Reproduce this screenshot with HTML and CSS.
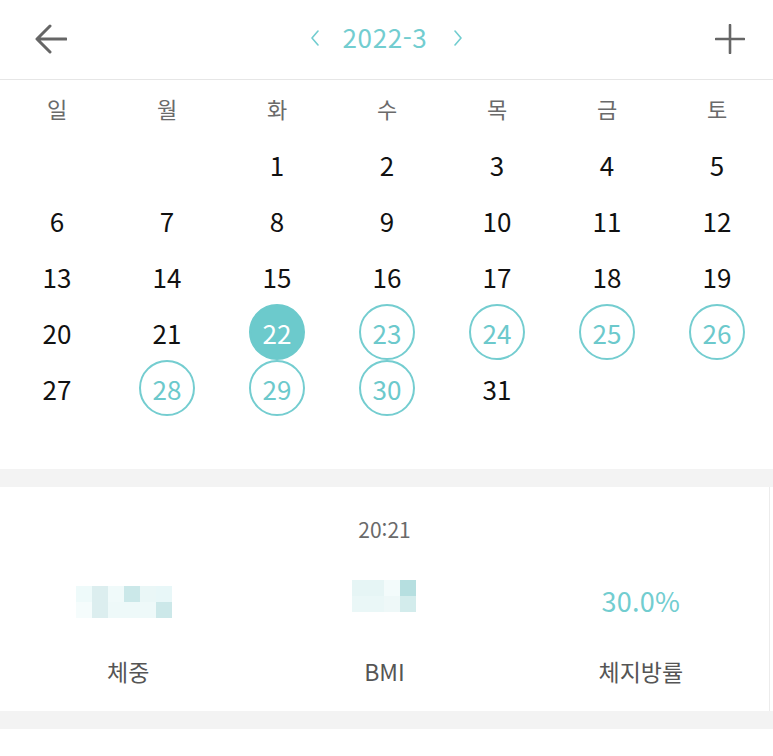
FILE: index.html
```html
<!DOCTYPE html>
<html lang="ko">
<head>
<meta charset="utf-8">
<link rel="stylesheet" href="styles.css">
</head>
<body>
<div class="app">
  <header class="topbar">
    <button class="icon-btn back" aria-label="back">
      <svg width="32" height="30" viewBox="0 0 32 30"><path d="M31 15H3M15 2L2 15L15 28" fill="none" stroke="#666" stroke-width="3" stroke-linecap="round" stroke-linejoin="round"/></svg>
    </button>
    <div class="month-nav">
      <span class="chev">
        <svg width="10" height="16" viewBox="0 0 10 16"><path d="M8 1L2 8L8 15" fill="none" stroke="#72cdd0" stroke-width="1.6" stroke-linecap="round" stroke-linejoin="round"/></svg>
      </span>
      <span class="month">2022-3</span>
      <span class="chev">
        <svg width="10" height="16" viewBox="0 0 10 16"><path d="M2 1L8 8L2 15" fill="none" stroke="#72cdd0" stroke-width="1.6" stroke-linecap="round" stroke-linejoin="round"/></svg>
      </span>
    </div>
    <button class="icon-btn plus" aria-label="add">
      <svg width="30" height="30" viewBox="0 0 30 30"><path d="M15 1V29M1 15H29" fill="none" stroke="#666" stroke-width="2.6" stroke-linecap="round"/></svg>
    </button>
  </header>

  <section class="calendar">
    <div class="week">
      <span>일</span><span>월</span><span>화</span><span>수</span><span>목</span><span>금</span><span>토</span>
    </div>
    <div class="days">
      <span></span><span></span>
      <span class="day">1</span><span class="day">2</span><span class="day">3</span><span class="day">4</span><span class="day">5</span>
      <span class="day">6</span><span class="day">7</span><span class="day">8</span><span class="day">9</span><span class="day">10</span><span class="day">11</span><span class="day">12</span>
      <span class="day">13</span><span class="day">14</span><span class="day">15</span><span class="day">16</span><span class="day">17</span><span class="day">18</span><span class="day">19</span>
      <span class="day">20</span><span class="day">21</span><span class="day"><b class="dot filled">22</b></span><span class="day"><b class="dot">23</b></span><span class="day"><b class="dot">24</b></span><span class="day"><b class="dot">25</b></span><span class="day"><b class="dot">26</b></span>
      <span class="day">27</span><span class="day"><b class="dot">28</b></span><span class="day"><b class="dot">29</b></span><span class="day"><b class="dot">30</b></span><span class="day">31</span><span></span><span></span>
    </div>
  </section>

  <div class="spacer"></div>

  <section class="record">
    <div class="time">20:21</div>
    <div class="metrics">
      <div class="metric">
        <div class="value">
          <div class="pix pix-w">
            <i style="background:#eefafa"></i><i style="background:#dceeef"></i><i style="background:#f0fafa"></i><i style="background:#cbe8e9"></i><i style="background:#eaf7f7"></i><i style="background:#e8f7f8"></i>
            <i style="background:#f5fcfc"></i><i style="background:#dceeef"></i><i style="background:#eef9f9"></i><i style="background:#eef9f9"></i><i style="background:#eef9f9"></i><i style="background:#cce8e9"></i>
          </div>
        </div>
        <div class="label">체중</div>
      </div>
      <div class="metric">
        <div class="value">
          <div class="pix pix-b">
            <i style="background:#e6f5f5"></i><i style="background:#e6f5f5"></i><i style="background:#f3fbfb"></i><i style="background:#b6dfe0"></i>
            <i style="background:#eaf7f7"></i><i style="background:#eaf7f7"></i><i style="background:#eef8f8"></i><i style="background:#d3ecec"></i>
          </div>
        </div>
        <div class="label">BMI</div>
      </div>
      <div class="metric">
        <div class="value pct">30.0%</div>
        <div class="label">체지방률</div>
      </div>
    </div>
  </section>

  <div class="gap"></div>
</div>
</body>
</html>
```

FILE: styles.css
```css
* { box-sizing: border-box; }
html, body { margin: 0; padding: 0; background: #fff; }
body {
  font-family: "Noto Sans CJK KR", "Noto Sans", "Liberation Sans", sans-serif;
  width: 773px;
  height: 756px;
  overflow: hidden;
}
.app { display: flex; flex-direction: column; }

.topbar {
  height: 80px;
  border-bottom: 1px solid #e6e6e6;
  display: flex;
  align-items: center;
  justify-content: space-between;
  padding: 0 27px 2px 35px;
}
.icon-btn {
  border: 0;
  background: none;
  padding: 0;
  display: flex;
  align-items: center;
  justify-content: center;
  width: 32px;
  height: 32px;
}
.month-nav {
  display: flex;
  align-items: center;
  margin-left: -8px;
  margin-bottom: 4px;
}
.chev { display: flex; width: 10px; height: 16px; margin-top: 3px; }
.month {
  color: #72cdd0;
  font-size: 26px;
  line-height: 1;
  margin: 0 26px 0 23px;
  letter-spacing: 0.6px;
}

.calendar { padding: 0 0 53px 2px; }
.week, .days {
  display: grid;
  grid-template-columns: repeat(7, 110px);
}
.week span {
  height: 56px;
  display: flex;
  align-items: center;
  justify-content: center;
  color: #6a6a6a;
  font-size: 22px;
}
.days span {
  height: 56px;
  display: flex;
  align-items: center;
  justify-content: center;
  color: #111;
  font-size: 26px;
}
.dot {
  width: 56px;
  height: 56px;
  border-radius: 50%;
  border: 2px solid #74cdd0;
  color: #6cc9cc;
  font-weight: 400;
  display: flex;
  align-items: center;
  justify-content: center;
  font-size: 26px;
}
.dot.filled {
  background: #6ccacc;
  border-color: #6ccacc;
  color: #fff;
}

.spacer { height: 18px; background: #f3f3f3; }

.record {
  width: 770px;
  height: 224px;
  background: #fff;
  display: flex;
  flex-direction: column;
  align-items: stretch;
  border-right: 1px solid #ececec;
}
.time {
  color: #6a6a6a;
  font-size: 21px;
  text-align: center;
  margin-top: 27px;
  line-height: 30px;
}
.metrics {
  display: grid;
  grid-template-columns: repeat(3, 1fr);
  margin-top: 26px;
}
.metric {
  display: flex;
  flex-direction: column;
  align-items: center;
}
.value {
  height: 60px;
  display: flex;
  align-items: center;
  justify-content: center;
}
.pct { color: #72cdd0; font-size: 27px; letter-spacing: 0.3px; }
.label {
  color: #555;
  font-size: 23px;
  margin-top: 25px;
  line-height: 32px;
}
.pix { display: grid; }
.pix i { display: block; width: 16px; height: 16px; }
.pix-w { grid-template-columns: repeat(6, 16px); margin: 4px 8px 0 0; }
.pix-b { grid-template-columns: repeat(4, 16px); margin-top: -8px; }

.gap { height: 18px; background: #f3f3f3; }
```
